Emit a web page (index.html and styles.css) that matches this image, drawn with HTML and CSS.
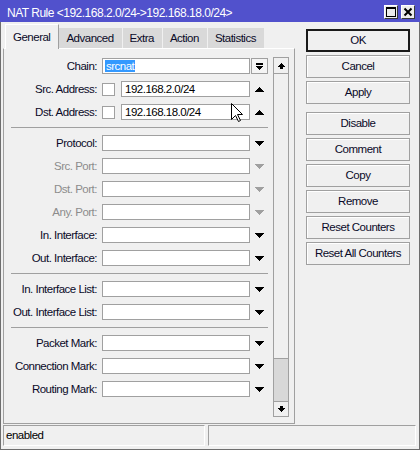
FILE: index.html
```html
<!DOCTYPE html>
<html>
<head>
<meta charset="utf-8">
<link rel="stylesheet" href="styles.css">
</head>
<body>
<div class="window">
  <div class="titlebar">
    <span class="title">NAT Rule &lt;192.168.2.0/24-&gt;192.168.18.0/24&gt;</span>
    <div class="tb-buttons">
      <span class="tb-btn"><svg width="10" height="10" viewBox="0 0 10 10"><path d="M0 0h10v2H0z M0 2h1v8H0z M9 2h1v8H9z M0 9h10v1H0z" fill="#000"/></svg></span>
      <span class="tb-btn"><svg width="10" height="10" viewBox="0 0 10 10"><path d="M1.5 1.5L8.5 8.5M8.5 1.5L1.5 8.5" stroke="#000" stroke-width="2"/></svg></span>
    </div>
  </div>

  <div class="main">
    <div class="left">
      <div class="tabs">
        <span class="tab active">General</span>
        <span class="tab">Advanced</span>
        <span class="tab">Extra</span>
        <span class="tab">Action</span>
        <span class="tab">Statistics</span>
      </div>
      <div class="panel">
        <div class="form">
          <span class="label">Chain:</span>
          <span class="field"><span class="input"><span class="sel">srcnat</span></span></span>
          <span class="arrow"><span class="combo-btn"><svg width="7" height="7" viewBox="0 0 7 7"><path d="M0 0h7v2H0z M0 3h7v1H0z M1 4h5v1H1z M2 5h3v1H2z M3 6h1v1H3z" fill="#000"/></svg></span></span>

          <span class="label">Src. Address:</span>
          <span class="field"><span class="check"></span><span class="input grow">192.168.2.0/24</span></span>
          <span class="arrow"><svg width="9" height="5" viewBox="0 0 9 5"><path d="M4 0h1v1H4z M3 1h3v1H3z M2 2h5v1H2z M1 3h7v1H1z M0 4h9v1H0z" fill="#000"/></svg></span>

          <span class="label">Dst. Address:</span>
          <span class="field"><span class="check"></span><span class="input grow">192.168.18.0/24</span></span>
          <span class="arrow"><svg width="9" height="5" viewBox="0 0 9 5"><path d="M4 0h1v1H4z M3 1h3v1H3z M2 2h5v1H2z M1 3h7v1H1z M0 4h9v1H0z" fill="#000"/></svg></span>

          <span class="sep"></span>

          <span class="label">Protocol:</span>
          <span class="field"><span class="input"></span></span>
          <span class="arrow"><svg width="9" height="5" viewBox="0 0 9 5"><path d="M0 0h9v1H0z M1 1h7v1H1z M2 2h5v1H2z M3 3h3v1H3z M4 4h1v1H4z" fill="#000"/></svg></span>

          <span class="label disabled">Src. Port:</span>
          <span class="field"><span class="input"></span></span>
          <span class="arrow disabled"><svg width="9" height="5" viewBox="0 0 9 5"><path d="M0 0h9v1H0z M1 1h7v1H1z M2 2h5v1H2z M3 3h3v1H3z M4 4h1v1H4z" fill="currentColor"/></svg></span>

          <span class="label disabled">Dst. Port:</span>
          <span class="field"><span class="input"></span></span>
          <span class="arrow disabled"><svg width="9" height="5" viewBox="0 0 9 5"><path d="M0 0h9v1H0z M1 1h7v1H1z M2 2h5v1H2z M3 3h3v1H3z M4 4h1v1H4z" fill="currentColor"/></svg></span>

          <span class="label disabled">Any. Port:</span>
          <span class="field"><span class="input"></span></span>
          <span class="arrow disabled"><svg width="9" height="5" viewBox="0 0 9 5"><path d="M0 0h9v1H0z M1 1h7v1H1z M2 2h5v1H2z M3 3h3v1H3z M4 4h1v1H4z" fill="currentColor"/></svg></span>

          <span class="label">In. Interface:</span>
          <span class="field"><span class="input"></span></span>
          <span class="arrow"><svg width="9" height="5" viewBox="0 0 9 5"><path d="M0 0h9v1H0z M1 1h7v1H1z M2 2h5v1H2z M3 3h3v1H3z M4 4h1v1H4z" fill="#000"/></svg></span>

          <span class="label">Out. Interface:</span>
          <span class="field"><span class="input"></span></span>
          <span class="arrow"><svg width="9" height="5" viewBox="0 0 9 5"><path d="M0 0h9v1H0z M1 1h7v1H1z M2 2h5v1H2z M3 3h3v1H3z M4 4h1v1H4z" fill="#000"/></svg></span>

          <span class="sep"></span>

          <span class="label">In. Interface List:</span>
          <span class="field"><span class="input"></span></span>
          <span class="arrow"><svg width="9" height="5" viewBox="0 0 9 5"><path d="M0 0h9v1H0z M1 1h7v1H1z M2 2h5v1H2z M3 3h3v1H3z M4 4h1v1H4z" fill="#000"/></svg></span>

          <span class="label">Out. Interface List:</span>
          <span class="field"><span class="input"></span></span>
          <span class="arrow"><svg width="9" height="5" viewBox="0 0 9 5"><path d="M0 0h9v1H0z M1 1h7v1H1z M2 2h5v1H2z M3 3h3v1H3z M4 4h1v1H4z" fill="#000"/></svg></span>

          <span class="sep"></span>

          <span class="label">Packet Mark:</span>
          <span class="field"><span class="input"></span></span>
          <span class="arrow"><svg width="9" height="5" viewBox="0 0 9 5"><path d="M0 0h9v1H0z M1 1h7v1H1z M2 2h5v1H2z M3 3h3v1H3z M4 4h1v1H4z" fill="#000"/></svg></span>

          <span class="label">Connection Mark:</span>
          <span class="field"><span class="input"></span></span>
          <span class="arrow"><svg width="9" height="5" viewBox="0 0 9 5"><path d="M0 0h9v1H0z M1 1h7v1H1z M2 2h5v1H2z M3 3h3v1H3z M4 4h1v1H4z" fill="#000"/></svg></span>

          <span class="label">Routing Mark:</span>
          <span class="field"><span class="input"></span></span>
          <span class="arrow"><svg width="9" height="5" viewBox="0 0 9 5"><path d="M0 0h9v1H0z M1 1h7v1H1z M2 2h5v1H2z M3 3h3v1H3z M4 4h1v1H4z" fill="#000"/></svg></span>
        </div>
        <div class="scrollbar">
          <span class="sb-btn up"><svg width="7" height="6" viewBox="0 0 7 6"><path d="M3 0h1v1H3z M2 1h3v1H2z M1 2h5v1H1z M0 3h7v1H0z M2 4h3v2H2z" fill="#000"/></svg></span>
          <span class="sb-track"></span>
          <span class="sb-thumb"></span>
          <span class="sb-btn down"><svg width="7" height="6" viewBox="0 0 7 6"><path d="M2 0h3v2H2z M0 2h7v1H0z M1 3h5v1H1z M2 4h3v1H2z M3 5h1v1H3z" fill="#000"/></svg></span>
        </div>
      </div>
    </div>

    <div class="buttons">
      <span class="btn default">OK</span>
      <span class="btn">Cancel</span>
      <span class="btn">Apply</span>
      <span class="btn group">Disable</span>
      <span class="btn">Comment</span>
      <span class="btn">Copy</span>
      <span class="btn">Remove</span>
      <span class="btn">Reset Counters</span>
      <span class="btn">Reset All Counters</span>
    </div>
  </div>

  <div class="statusbar">
    <span class="status-cell first">enabled</span>
    <span class="status-cell"></span>
  </div>

  <svg class="cursor" width="13" height="20" viewBox="0 0 13 20"><path d="M0.5 0.5V16.5L4.5 12.5L7.5 18.5L9.5 17.5L6.5 11.5H11.5Z" fill="#fff" stroke="#000" stroke-width="1"/></svg>
</div>
</body>
</html>
```

FILE: styles.css
```css
body {
  margin: 0;
  background: #f0f0f0;
}

.window {
  position: relative;
  width: 420px;
  height: 450px;
  box-sizing: border-box;
  background: #f0f0f0;
  border: 1px solid #6e6e6e;
  border-top: 0;
  display: flex;
  flex-direction: column;
  font-family: "Liberation Sans", Arial, sans-serif;
  font-size: 11.5px;
  letter-spacing: -0.5px;
  color: #0a0a28;
}

.titlebar {
  height: 22px;
  margin: 0 -1px;
  padding: 0 5px 0 7px;
  background: #5151cc;
  color: #fff;
  display: flex;
  align-items: center;
}

.title {
  flex: 1;
  padding-top: 4px;
  font-size: 12px;
  white-space: nowrap;
}

.tb-buttons {
  display: flex;
  gap: 3px;
  margin-top: 2px;
}

.tb-btn {
  width: 14px;
  height: 14px;
  box-sizing: border-box;
  background: #ececec;
  border: 1px solid;
  border-color: #fff #3a3a3a #3a3a3a #fff;
  display: flex;
  align-items: center;
  justify-content: center;
}

.main {
  flex: 1;
  display: flex;
  padding: 3px 0 0 2px;
}

.left {
  width: 292px;
  display: flex;
  flex-direction: column;
}

.tabs {
  height: 23px;
  padding-left: 2px;
  display: flex;
  align-items: flex-end;
}

.tab {
  height: 20px;
  line-height: 20px;
  padding: 0 8px 0 7px;
  background: #d9d9d9;
  border-right: 1px solid #f0f0f0;
  white-space: nowrap;
}

.tab.active {
  position: relative;
  z-index: 1;
  height: 24px;
  line-height: 24px;
  margin-bottom: -1px;
  background: #f0f0f0;
  border: 1px solid;
  border-color: #fff #a0a0a0 #f0f0f0 #fff;
  border-bottom: 0;
}

.panel {
  flex: 1;
  display: flex;
  border: 1px solid #a0a0a0;
  border-top-color: #fff;
}

.form {
  width: 264px;
  padding-top: 9px;
  display: grid;
  grid-template-columns: 98px 148px 18px;
  row-gap: 7px;
  align-content: start;
}

.label {
  height: 16px;
  line-height: 16px;
  padding-right: 5px;
  text-align: right;
  white-space: nowrap;
}

.label.disabled {
  color: #8c8c8c;
}

.field {
  height: 16px;
  display: flex;
  align-items: center;
}

.input {
  box-sizing: border-box;
  width: 100%;
  height: 16px;
  line-height: 14px;
  padding-left: 2px;
  background: #fff;
  border: 1px solid #a0a0a0;
  color: #000;
  white-space: nowrap;
}

.input.grow {
  flex: 1;
  width: auto;
  padding-left: 3px;
}

.sel {
  background: #3399ff;
  color: #fff;
  padding: 0 1px;
}

.check {
  width: 13px;
  height: 13px;
  box-sizing: border-box;
  margin-right: 6px;
  background: #fff;
  border: 1px solid #a0a0a0;
}

.arrow {
  height: 16px;
  display: flex;
  align-items: center;
  justify-content: center;
}

.arrow.disabled {
  color: #a0a0a0;
}

.combo-btn {
  width: 17px;
  height: 16px;
  margin-left: 1px;
  box-sizing: border-box;
  border: 1px solid #a0a0a0;
  background: #f4f4f4;
  display: flex;
  align-items: center;
  justify-content: center;
}

.sep {
  grid-column: 1 / -1;
  height: 1px;
  margin-left: 7px;
  background: #a0a0a0;
}

.scrollbar {
  width: 16px;
  margin: 8px 0 6px 5px;
  box-sizing: border-box;
  border: 1px solid #a0a0a0;
  background: #f0f0f0;
  display: flex;
  flex-direction: column;
}

.sb-btn {
  height: 15px;
  display: flex;
  align-items: center;
  justify-content: center;
}

.sb-btn.up {
  border-bottom: 1px solid #a0a0a0;
}

.sb-btn.down {
  height: 14px;
  border-top: 1px solid #a0a0a0;
}

.sb-track {
  flex: 1;
}

.sb-thumb {
  height: 42px;
  background: #d8d8d8;
  border-top: 1px solid #a0a0a0;
}

.buttons {
  width: 104px;
  margin: 4px 0 0 11px;
  display: flex;
  flex-direction: column;
  gap: 3px;
}

.btn {
  height: 23px;
  box-sizing: border-box;
  border: 1px solid #a0a0a0;
  box-shadow: inset 1px 1px 0 #fff;
  background: #f0f0f0;
  text-align: center;
  line-height: 21px;
  white-space: nowrap;
}

.btn.default {
  border: 2px solid #1a1a1a;
  box-shadow: none;
  line-height: 19px;
}

.btn.group {
  margin-top: 5px;
}

.statusbar {
  height: 21px;
  margin: 1px 3px 3px 2px;
  display: flex;
  gap: 3px;
}

.status-cell {
  flex: 1;
  box-sizing: border-box;
  border: 1px solid;
  border-color: #a0a0a0 #fff #fff #a0a0a0;
  padding-left: 2px;
  line-height: 19px;
  color: #000;
}

.status-cell.first {
  flex: none;
  width: 202px;
}

.cursor {
  position: absolute;
  left: 230px;
  top: 103px;
}
```
